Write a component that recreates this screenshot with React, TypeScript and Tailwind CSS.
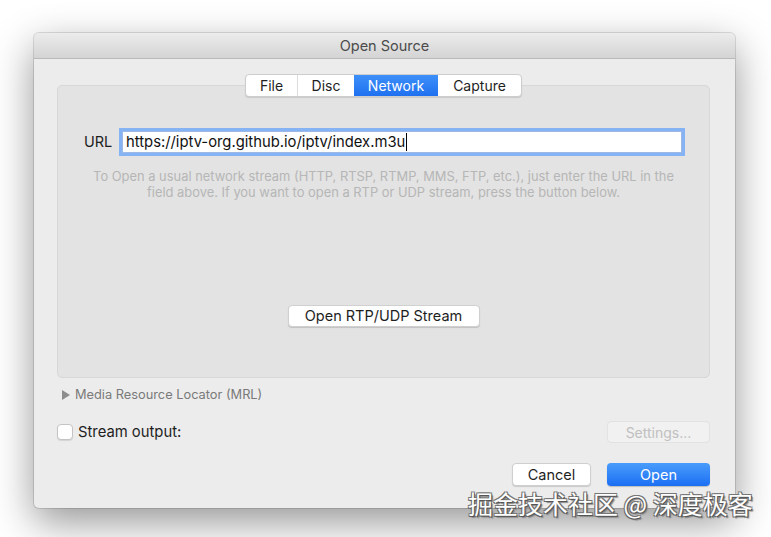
import React from "react";

export default function App() {
  return (
    <div className="relative w-[771px] h-[537px] overflow-hidden bg-white pt-[33px] pl-[34px] font-['Inter','Liberation_Sans',sans-serif]">
      <div className="w-[701px] h-[475px] rounded-[5px] bg-[#ececec] shadow-[0_14px_40px_rgba(0,0,0,0.42),0_0_0_1px_rgba(0,0,0,0.12)] flex flex-col">
        {/* title bar */}
        <div className="h-[26px] shrink-0 rounded-t-[5px] border-b border-[#b9b9b9] bg-gradient-to-b from-[#ececec] to-[#d4d4d4] flex items-center justify-center text-[14.5px] text-[#4b4b4b]">
          Open Source
        </div>
        <div className="flex flex-col pl-[23px] pr-[25px]">
          {/* tabs */}
          <div className="relative z-10 mt-[15px] flex justify-center">
            <div className="flex h-[23px] rounded-[4px] border border-[#cdcdcd] bg-white shadow-[0_1px_1px_rgba(0,0,0,0.12)] overflow-hidden text-[14px] text-[#1e1e1e]">
              <div className="w-[52px] flex items-center justify-center border-r border-[#dcdcdc]">File</div>
              <div className="w-[56px] flex items-center justify-center">Disc</div>
              <div className="w-[84px] flex items-center justify-center bg-gradient-to-b from-[#3d8ff8] to-[#1f70f0] text-white">Network</div>
              <div className="w-[83px] flex items-center justify-center">Capture</div>
            </div>
          </div>
          {/* box */}
          <div className="-mt-[12px] h-[293px] rounded-[5px] border border-[#d7d7d7] bg-[#e3e3e3] flex flex-col">
            <div className="mt-[45px] flex items-center pl-[26px]">
              <span className="text-[14.5px] text-[#1e1e1e] w-[38px]">URL</span>
              <div className="w-[560px] h-[22px] bg-white border border-[#9fb9e6] ring-[3px] ring-[#86b3f3] flex items-center pl-[3px] text-[14.8px] text-[#111]">
                <span>https://iptv-org.github.io/iptv/index.m3u</span>
                <span className="ml-[1px] w-[1px] h-[18px] bg-black"></span>
              </div>
            </div>
            <div className="mt-[16px] text-center text-[12.9px] leading-[16px] text-[#b6b6b6]">
              To Open a usual network stream (HTTP, RTSP, RTMP, MMS, FTP, etc.), just enter the URL in the
              <br />
              field above. If you want to open a RTP or UDP stream, press the button below.
            </div>
            <div className="mt-[104px] flex justify-center">
              <div className="w-[192px] h-[22px] rounded-[4px] bg-white border border-[#d0d0d0] shadow-[0_1px_1px_rgba(0,0,0,0.15)] flex items-center justify-center text-[14.5px] text-[#1e1e1e]">
                Open RTP/UDP Stream
              </div>
            </div>
          </div>
          {/* MRL */}
          <div className="mt-[9px] h-[16px] flex items-center text-[12.8px] text-[#7a7a7a]">
            <svg width="8" height="10" viewBox="0 0 8 10" className="ml-[5px]">
              <path d="M0 0 L8 5 L0 10 Z" fill="#8c8c8c" />
            </svg>
            <span className="ml-[5px]">Media Resource Locator (MRL)</span>
          </div>
          {/* stream output */}
          <div className="mt-[18px] h-[22px] flex items-center justify-between">
            <div className="flex items-center">
              <div className="w-[16px] h-[16px] rounded-[4px] bg-white border border-[#c4c4c4] shadow-[0_1px_1px_rgba(0,0,0,0.1)]"></div>
              <span className="ml-[5px] text-[14.8px] text-[#1e1e1e]">Stream output:</span>
            </div>
            <div className="w-[103px] h-[22px] rounded-[4px] bg-[#f1f1f1] border border-[#e2e2e2] flex items-center justify-center text-[14px] text-[#c0c0c0]">
              Settings...
            </div>
          </div>
          {/* buttons */}
          <div className="mt-[20px] flex justify-end gap-[16px]">
            <div className="w-[79px] h-[23px] rounded-[4px] bg-white border border-[#cfcfcf] shadow-[0_1px_1px_rgba(0,0,0,0.15)] flex items-center justify-center text-[14.5px] text-[#1e1e1e]">
              Cancel
            </div>
            <div className="w-[103px] h-[23px] rounded-[4px] bg-gradient-to-b from-[#4a9cfb] to-[#1b6ef3] shadow-[0_1px_1px_rgba(0,0,0,0.2)] flex items-center justify-center text-[14.5px] text-white">
              Open
            </div>
          </div>
        </div>
      </div>
      {/* watermark */}
      <div className="absolute left-[468px] top-[487px] text-[25px] leading-[32px] text-white font-['Noto_Sans_CJK_SC',sans-serif] [text-shadow:1px_1px_0_#555,-1px_-1px_0_#777,1px_-1px_0_#777,-1px_1px_0_#666,2px_2px_1px_#888] whitespace-nowrap">
        掘金技术社区 @ 深度极客
      </div>
    </div>
  );
}
